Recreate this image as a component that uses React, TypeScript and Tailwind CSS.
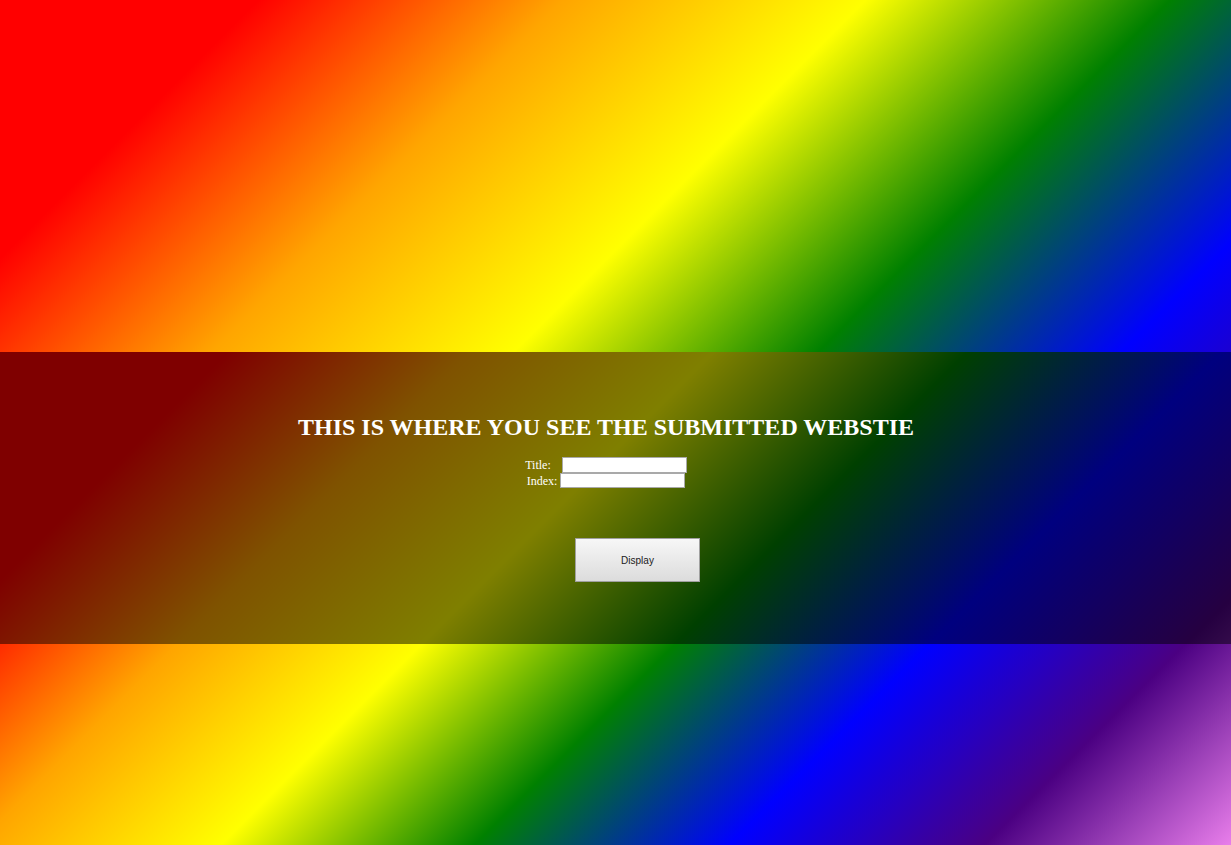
import React from 'react';

const App: React.FC = () => {
  return (
    <div className="min-h-screen w-full overflow-hidden">
      <header className="h-[352px] bg-[linear-gradient(135deg,red_16.3%,orange_35.5%,yellow_54.7%,green_73.9%,blue_93.1%,indigo_112.3%,violet_131.5%)]"></header>

      <div className="bg-[linear-gradient(135deg,red_13.2%,orange_27.2%,yellow_41.4%,green_56.1%,blue_70.9%,indigo_85.7%,violet_100.5%)]">
        <section className="h-[292px] bg-black/50 pt-[61px] pr-[19px] flex flex-col items-center font-['Liberation_Serif',serif] text-white">
          <h2 className="text-[24px] leading-[28px] font-bold whitespace-nowrap">
            THIS IS WHERE YOU SEE THE SUBMITTED WEBSTIE
          </h2>

          <form className="mt-[16px] flex flex-col items-center text-[12px]">
            <div className="flex items-center h-[16px]">
              <label htmlFor="title">Title:</label>
              <input
                id="title"
                type="text"
                className="ml-[11px] w-[125px] h-[16px] bg-white border border-[#a9a9a9] outline-none"
              />
            </div>
            <div className="flex items-center h-[15px]">
              <label htmlFor="index">Index:</label>
              <input
                id="index"
                type="text"
                className="ml-[3px] w-[125px] h-[15px] bg-white border border-[#a9a9a9] outline-none"
              />
            </div>
          </form>

          <button
            type="button"
            className="mt-[50px] ml-[63px] w-[125px] h-[44px] border border-[#a0a0a0] bg-gradient-to-b from-[#f7f7f7] to-[#dcdcdc] text-[10px] text-[#1a1a1a] font-['Liberation_Sans',sans-serif]"
          >
            Display
          </button>
        </section>
        <div className="h-[201px]"></div>
      </div>
    </div>
  );
};

export default App;
